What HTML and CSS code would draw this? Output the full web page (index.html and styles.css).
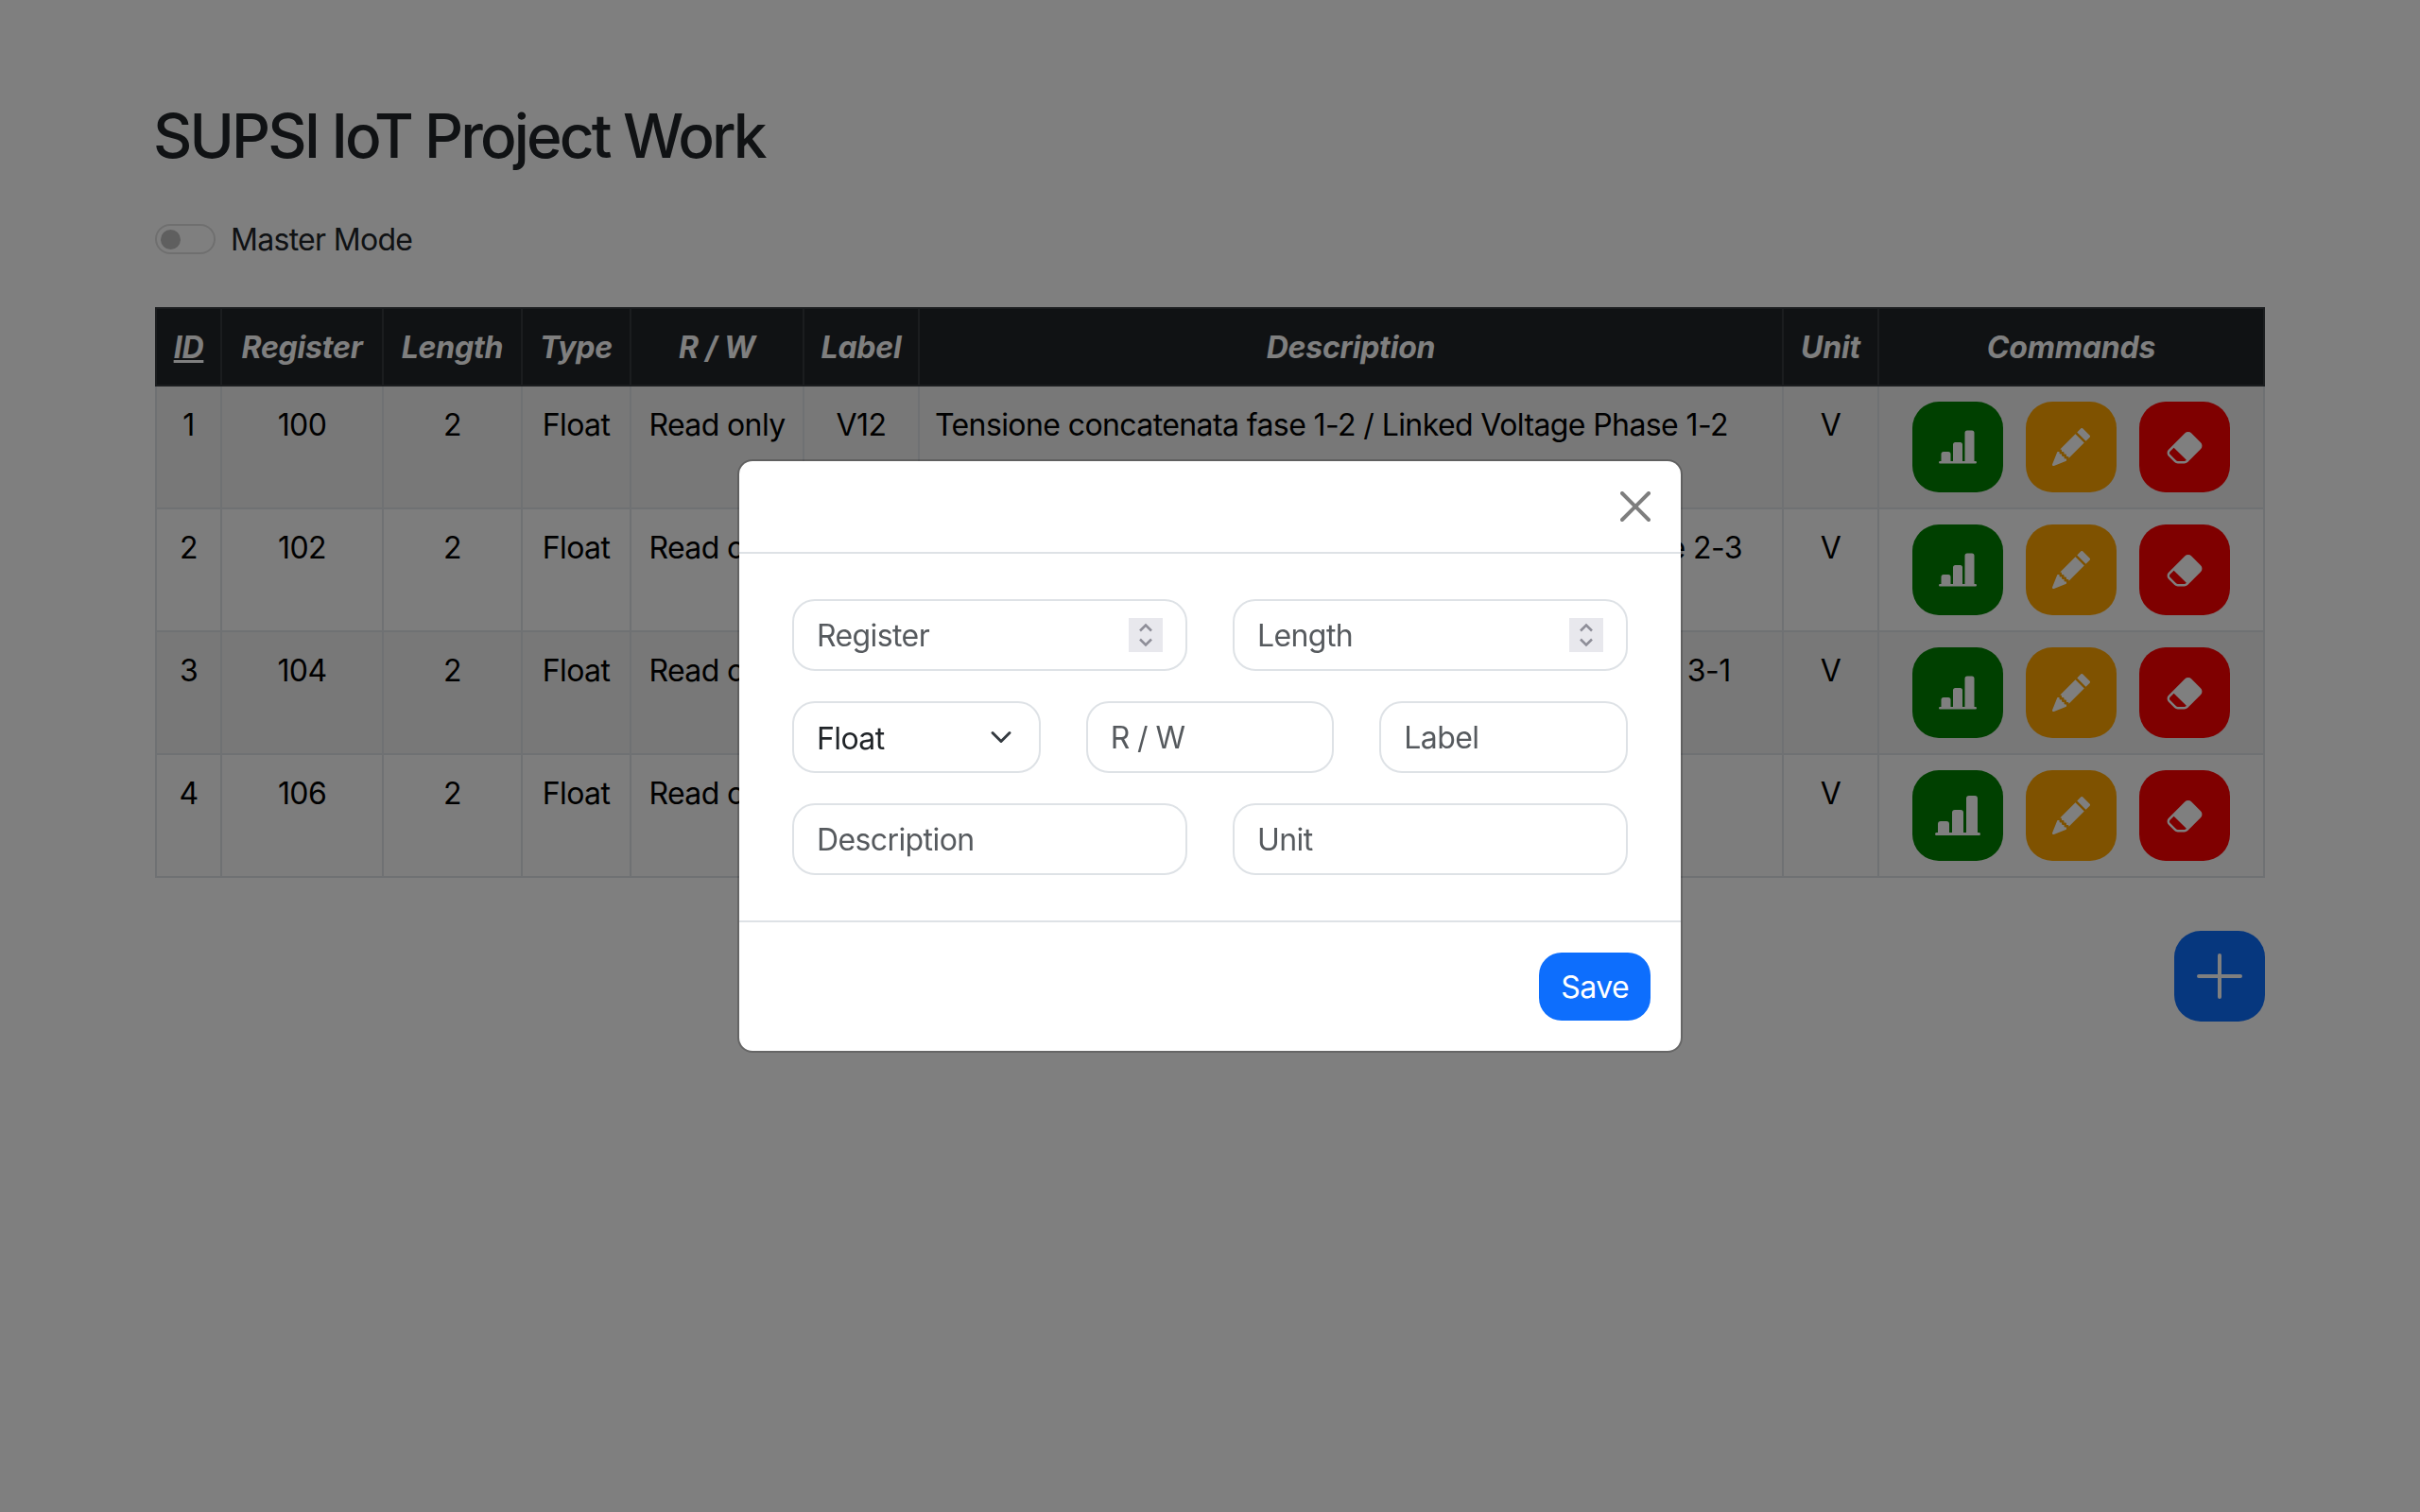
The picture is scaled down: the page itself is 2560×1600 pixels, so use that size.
FILE: index.html
```html
<!DOCTYPE html>
<html>
  <head>
    <meta charset="utf-8">
    <title>SUPSI IoT Project Work</title>
    <link rel="stylesheet" href="styles.css">
  </head>
  <body>
    <main class="page">
      <h1>SUPSI IoT Project Work</h1>
      <div class="master">
        <span class="switch"><span class="knob"></span></span>
        <span class="master-label">Master Mode</span>
      </div>
      <table class="registers">
        <colgroup>
          <col class="c-id"><col class="c-reg"><col class="c-len"><col class="c-type"><col class="c-rw">
          <col class="c-label"><col class="c-desc"><col class="c-unit"><col class="c-cmd">
        </colgroup>
        <thead>
          <tr>
            <th><u>ID</u></th>
            <th>Register</th>
            <th>Length</th>
            <th>Type</th>
            <th>R / W</th>
            <th>Label</th>
            <th>Description</th>
            <th>Unit</th>
            <th>Commands</th>
          </tr>
        </thead>
        <tbody>
          <tr>
            <td>1</td><td>100</td><td>2</td><td>Float</td><td>Read only</td><td>V12</td>
            <td class="desc">Tensione concatenata fase 1-2 / Linked Voltage Phase 1-2</td>
            <td>V</td>
            <td class="cmds">
              <div class="commands">
                <button class="cmd green" type="button"><svg viewBox="0 0 16 16"><use href="#i-chart"></use></svg></button>
                <button class="cmd orange" type="button"><svg viewBox="0 0 16 16"><use href="#i-pencil"></use></svg></button>
                <button class="cmd red" type="button"><svg viewBox="0 0 16 16"><use href="#i-eraser"></use></svg></button>
              </div>
            </td>
          </tr>
          <tr>
            <td>2</td><td>102</td><td>2</td><td>Float</td><td>Read only</td><td>V23</td>
            <td class="desc">Tensione concatenata fase 2-3 / Linked Voltage Phase 2-3</td>
            <td>V</td>
            <td class="cmds">
              <div class="commands">
                <button class="cmd green" type="button"><svg viewBox="0 0 16 16"><use href="#i-chart"></use></svg></button>
                <button class="cmd orange" type="button"><svg viewBox="0 0 16 16"><use href="#i-pencil"></use></svg></button>
                <button class="cmd red" type="button"><svg viewBox="0 0 16 16"><use href="#i-eraser"></use></svg></button>
              </div>
            </td>
          </tr>
          <tr>
            <td>3</td><td>104</td><td>2</td><td>Float</td><td>Read only</td><td>V31</td>
            <td class="desc">Tensione concatenata fase 3-1 / Linked Voltage Phase 3-1</td>
            <td>V</td>
            <td class="cmds">
              <div class="commands">
                <button class="cmd green" type="button"><svg viewBox="0 0 16 16"><use href="#i-chart"></use></svg></button>
                <button class="cmd orange" type="button"><svg viewBox="0 0 16 16"><use href="#i-pencil"></use></svg></button>
                <button class="cmd red" type="button"><svg viewBox="0 0 16 16"><use href="#i-eraser"></use></svg></button>
              </div>
            </td>
          </tr>
          <tr>
            <td>4</td><td>106</td><td>2</td><td>Float</td><td>Read only</td><td>V1N</td>
            <td class="desc">Tensione di fase 1 / Phase Voltage 1</td>
            <td>V</td>
            <td class="cmds">
              <div class="commands">
                <button class="cmd green" type="button"><svg class="big" viewBox="0 0 16 16"><use href="#i-chart"></use></svg></button>
                <button class="cmd orange" type="button"><svg viewBox="0 0 16 16"><use href="#i-pencil"></use></svg></button>
                <button class="cmd red" type="button"><svg viewBox="0 0 16 16"><use href="#i-eraser"></use></svg></button>
              </div>
            </td>
          </tr>
        </tbody>
      </table>
      <div class="add-row">
        <button class="add" type="button">
          <svg viewBox="0 0 16 16"><path d="M8 2a.5.5 0 0 1 .5.5v5h5a.5.5 0 0 1 0 1h-5v5a.5.5 0 0 1-1 0v-5h-5a.5.5 0 0 1 0-1h5v-5A.5.5 0 0 1 8 2Z"/></svg>
        </button>
      </div>
    </main>

    <div class="backdrop">
      <div class="modal">
        <div class="modal-header">
          <button class="close" type="button">
            <svg viewBox="0 0 16 16"><path d="M.293.293a1 1 0 0 1 1.414 0L8 6.586 14.293.293a1 1 0 1 1 1.414 1.414L9.414 8l6.293 6.293a1 1 0 0 1-1.414 1.414L8 9.414l-6.293 6.293a1 1 0 0 1-1.414-1.414L6.586 8 .293 1.707a1 1 0 0 1 0-1.414z"/></svg>
          </button>
        </div>
        <div class="modal-body">
          <div class="fields two">
            <label class="field">
              <input type="text" placeholder="Register">
              <span class="spin"><svg viewBox="0 0 36 36"><path d="M12 13.500 18 7.500l6 6M12 22.500l6 6 6-6"/></svg></span>
            </label>
            <label class="field">
              <input type="text" placeholder="Length">
              <span class="spin"><svg viewBox="0 0 36 36"><path d="M12 13.500 18 7.500l6 6M12 22.500l6 6 6-6"/></svg></span>
            </label>
          </div>
          <div class="fields three">
            <label class="field">
              <select><option>Float</option></select>
              <svg class="caret" viewBox="0 0 16 16"><path d="m2 5 6 6 6-6"/></svg>
            </label>
            <label class="field"><input type="text" placeholder="R / W"></label>
            <label class="field"><input type="text" placeholder="Label"></label>
          </div>
          <div class="fields two">
            <label class="field"><input type="text" placeholder="Description"></label>
            <label class="field"><input type="text" placeholder="Unit"></label>
          </div>
        </div>
        <div class="modal-footer">
          <button class="save" type="button">Save</button>
        </div>
      </div>
    </div>

    <svg class="sprites">
      <symbol id="i-chart" viewBox="0 0 16 16"><path d="M11 2a1 1 0 0 1 1-1h2a1 1 0 0 1 1 1v12h.5a.5.5 0 0 1 0 1H.5a.5.5 0 0 1 0-1H1v-3a1 1 0 0 1 1-1h2a1 1 0 0 1 1 1v3h1V7a1 1 0 0 1 1-1h2a1 1 0 0 1 1 1v7h1V2z"/></symbol>
      <symbol id="i-pencil" viewBox="0 0 16 16"><path d="M12.854.146a.5.5 0 0 0-.707 0L10.500 1.793 14.207 5.500l1.647-1.646a.5.5 0 0 0 0-.708l-3-3zm.646 6.061L9.793 2.500 3.293 9H3.500a.5.5 0 0 1 .5.5v.5h.5a.5.5 0 0 1 .5.5v.5h.5a.5.5 0 0 1 .5.5v.5h.5a.5.5 0 0 1 .5.5v.207l6.500-6.500zm-7.468 7.468A.5.5 0 0 1 6 13.500V13h-.5a.5.5 0 0 1-.5-.5V12h-.5a.5.5 0 0 1-.5-.5V11h-.5a.5.5 0 0 1-.5-.5V10h-.5a.499.499 0 0 1-.175-.032l-.179.178a.5.5 0 0 0-.11.168l-2 5a.5.5 0 0 0 .65.65l5-2a.5.5 0 0 0 .168-.11l.178-.178z"/></symbol>
      <symbol id="i-eraser" viewBox="0 0 16 16"><path d="M8.086 2.207a2 2 0 0 1 2.828 0l3.879 3.879a2 2 0 0 1 0 2.828l-5.500 5.500A2 2 0 0 1 7.879 15H5.120a2 2 0 0 1-1.414-.586l-2.500-2.500a2 2 0 0 1 0-2.828l6.879-6.879zm.66 11.340L3.453 8.254 1.914 9.793a1 1 0 0 0 0 1.414l2.500 2.500a1 1 0 0 0 .707.293H7.880a1 1 0 0 0 .707-.293l.16-.16z"/></symbol>
    </svg>
  </body>
</html>
```

FILE: styles.css
```css
* {
  box-sizing: border-box;
}
body {
  margin: 0;
  font-family: Inter, "Liberation Sans", sans-serif;
  font-size: 32px;
  line-height: 48px;
  letter-spacing: -0.6px;
  color: #212529;
  background-color: #fff;
}
.page {
  padding: 105px 164px 0;
}
h1 {
  margin: 0 0 47px -2px;
  font-size: 64px;
  font-weight: 500;
  line-height: 77px;
  letter-spacing: -2.85px;
}
.master {
  display: flex;
  align-items: center;
  gap: 16px;
  height: 48px;
  margin-bottom: 48px;
}
.master-label {
  padding-top: 2px;
  letter-spacing: -0.7px;
}
.switch {
  display: flex;
  align-items: center;
  width: 64px;
  height: 32px;
  padding: 0 4px;
  border: 2px solid rgba(0, 0, 0, 0.13);
  border-radius: 32px;
}
.knob {
  width: 21px;
  height: 21px;
  border-radius: 50%;
  background-color: #bfbfbf;
}

/* table */
.registers {
  width: 2230px;
  table-layout: fixed;
  border-collapse: collapse;
  color: #000;
}
.c-id { width: 69px; }
.c-reg { width: 171px; }
.c-len { width: 147px; }
.c-type { width: 115px; }
.c-rw { width: 183px; }
.c-label { width: 122px; }
.c-desc { width: 914px; }
.c-unit { width: 101px; }
.c-cmd { width: 408px; }
th, td {
  padding: 17px 16px 15px;
  border: 2px solid #dee2e6;
  text-align: center;
  vertical-align: top;
  font-weight: 400;
  white-space: nowrap;
}
th {
  color: #fff;
  background-color: #212529;
  border-color: #373b3e;
  font-style: italic;
  font-weight: 700;
  letter-spacing: -0.2px;
}
tbody td {
  background-color: #fafafa;
}
tbody tr:nth-child(odd) td {
  background-color: #f0f0f0;
}
td.desc {
  text-align: left;
}
td.cmds {
  padding: 16px;
}
.commands {
  display: flex;
  justify-content: center;
  gap: 24px;
}
.cmd, .add {
  display: flex;
  align-items: center;
  justify-content: center;
  width: 96px;
  height: 96px;
  padding: 0;
  border: 0;
  border-radius: 28px;
  fill: #fff;
}
.cmd svg {
  width: 40px;
  height: 40px;
}
.cmd svg.big {
  width: 48px;
  height: 48px;
}
.green { background-color: #008000; }
.orange { background-color: #ffa500; }
.red { background-color: #ff0000; }
.add-row {
  display: flex;
  justify-content: flex-end;
  margin-top: 56px;
}
.add {
  background-color: #0d6efd;
}
.add svg {
  width: 64px;
  height: 64px;
}

/* modal */
.backdrop {
  position: fixed;
  inset: 0;
  display: flex;
  justify-content: center;
  align-items: flex-start;
  padding-top: 486px;
  background-color: rgba(0, 0, 0, 0.5);
}
.modal {
  width: 1000px;
  background-color: #fff;
  background-clip: padding-box;
  border: 2px solid rgba(0, 0, 0, 0.2);
  border-radius: 16px;
}
.modal-header {
  display: flex;
  justify-content: flex-end;
  height: 98px;
  padding: 32px 32px 0;
  border-bottom: 2px solid #dee2e6;
}
.close {
  width: 32px;
  height: 32px;
  padding: 0;
  border: 0;
  background: none;
  fill: #000;
  opacity: 0.5;
}
.close svg {
  display: block;
}
.modal-body {
  display: flex;
  flex-direction: column;
  gap: 32px;
  padding: 48px 56px;
}
.fields {
  display: grid;
  gap: 48px;
}
.two {
  grid-template-columns: repeat(2, minmax(0, 1fr));
}
.three {
  grid-template-columns: repeat(3, minmax(0, 1fr));
}
.field {
  display: flex;
  align-items: center;
  height: 76px;
  padding: 12px 24px;
  border: 2px solid #dee2e6;
  border-radius: 24px;
}
.field input, .field select {
  flex: 1;
  min-width: 0;
  height: 48px;
  padding: 2px 0 0;
  border: 0;
  outline: 0;
  font: inherit;
  letter-spacing: inherit;
  color: #212529;
  background: none;
  appearance: none;
}
.field input::placeholder {
  color: #565a5e;
  opacity: 1;
}
.spin {
  flex: none;
  width: 36px;
  height: 36px;
  background-color: #e8e8ed;
}
.spin svg {
  display: block;
  width: 36px;
  height: 36px;
  fill: none;
  stroke: #8e8e98;
  stroke-width: 2.5;
}
.caret {
  flex: none;
  width: 24px;
  height: 24px;
  margin-right: 4px;
  fill: none;
  stroke: #343a40;
  stroke-width: 2;
  stroke-linecap: round;
  stroke-linejoin: round;
  pointer-events: none;
}
.modal-footer {
  display: flex;
  justify-content: flex-end;
  padding: 32px;
  border-top: 2px solid #dee2e6;
}
.save {
  height: 72px;
  padding: 2px 23px 0;
  border: 0;
  border-radius: 24px;
  font: inherit;
  letter-spacing: inherit;
  color: #fff;
  background-color: #0d6efd;
}
.sprites {
  display: none;
}
```
